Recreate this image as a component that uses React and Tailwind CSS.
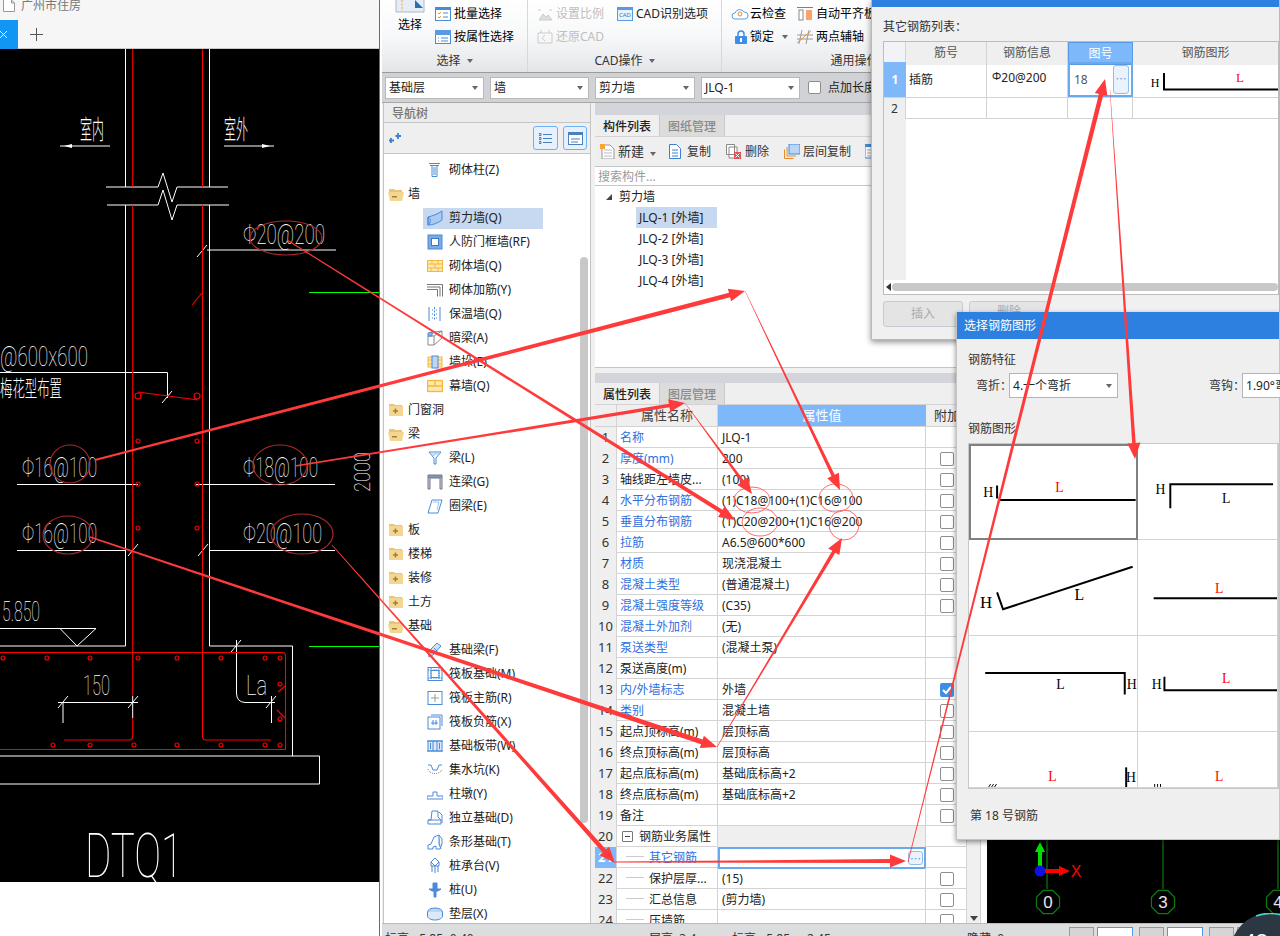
import React from "react";

const Caret = ({ c = "border-t-[#666]" }) => (
  <span className={`inline-block w-0 h-0 border-x-[3.5px] border-t-[4px] border-x-transparent ${c}`} />
);

function Ico({ k }) {
  const b = "#4a8ad8";
  const y = "#f5b83d";
  const common = { width: 16, height: 16, viewBox: "0 0 16 16", fill: "none", strokeWidth: 1, className: "shrink-0" };
  switch (k) {
    case "col": return <svg {...common} stroke={b}><path d="M2 1.5h11M3 3.5h9M5 3.5v11h5v-11M5 14.5h5M6 6h3M6 8h3M6 10h3M6 12h3" /></svg>;
    case "shear": return <svg {...common} stroke={b}><path d="M1 7c4-1 10-3 14-6v9c-4 3-9 5-14 5z" fill="#a9cbf2" /><path d="M1 7c3 1 3 6 0 8M1 7v8" /></svg>;
    case "rf": return <svg {...common}><rect x="1" y="1" width="14" height="14" fill="#7aa9e4" stroke={b} /><rect x="4.5" y="4.5" width="7" height="7" fill="#fff" stroke="#3d78c4" /></svg>;
    case "brick": return <svg {...common} stroke={y}><rect x="0.5" y="2.5" width="15" height="11" fill="#fde8ae" /><path d="M0.5 6h15M0.5 10h15M5 2.5V6M11 2.5V6M8 6v4M4 10v3.5M11 10v3.5" /></svg>;
    case "rw": return <svg {...common} stroke="#777"><path d="M0 2.5h15.5v12M0 5h13v9.5M0 7.5h10.5v7" /></svg>;
    case "ins": return <svg {...common} stroke={b}><path d="M2 1v14M13 1v14" /><path d="M7.5 1v14M5 4h1M9 4h1M5 8h1M9 8h1M5 12h1M9 12h1" strokeDasharray="2 1.5" /></svg>;
    case "dark": return <svg {...common} stroke="#888"><path d="M1 6h6v9H1zM1 6l7-4 7-1v7l-8 7M7 6l8-5" /><path d="M1 3l4-1v4H1z" fill="#8ab6ec" stroke={b} /></svg>;
    case "duo": return <svg {...common} stroke={y}><rect x="1" y="3" width="14" height="10" fill="#fde8ae" /><path d="M1 6h14M1 10h14" /><rect x="5" y="2" width="6" height="12" fill="#bcd6f5" stroke={b} /></svg>;
    case "cur": return <svg {...common} stroke={y}><rect x="0.5" y="2.5" width="15" height="11" fill="#fde8ae" strokeWidth="1.3" /><path d="M0.5 8h15M8 2.5V8" strokeWidth="1.3" /></svg>;
    case "beam": return <svg {...common} stroke={b}><path d="M2 2h12L9 8v6H7V8z" /><path d="M3 4h10M6 6l3-3" stroke="#9cc2f0" /></svg>;
    case "lin": return <svg {...common} stroke="#778"><path d="M1 1h14v3H1z" fill="#7d99b8" /><path d="M3 4v11h-2V4M15 4v11h-2V4" fill="#ccd" /></svg>;
    case "ring": return <svg {...common} stroke={b}><path d="M5 2h10l-4 13H1z" /><path d="M6 4h6l-2 8" stroke="#9cc2f0" /></svg>;
    case "fb": return <svg {...common} stroke={b}><path d="M1 10L10 1l4 3-8 9-4 2z" fill="#cfe1f7" /><path d="M4 9l3 3M7 6l3 3" /></svg>;
    case "raft": return <svg {...common} stroke={b}><rect x="1" y="1.5" width="14" height="13" /><rect x="4" y="4.5" width="8" height="7" /><path d="M1 4h14M1 12h14M4 1.5v13M12 1.5v13" strokeDasharray="1.5 1" /></svg>;
    case "rm": return <svg {...common} stroke={b}><rect x="1" y="1.5" width="14" height="13" /><path d="M8 4v8M4 8h8" stroke="#999" /></svg>;
    case "rn": return <svg {...common} stroke={b}><path d="M4 1h11v11" /><rect x="1" y="3" width="12" height="12" /><path d="M6 6v5M9 6v5M4 9h7" /></svg>;
    case "st": return <svg {...common} stroke={b}><rect x="1" y="3" width="14" height="10" fill="#dbe9fa" /><path d="M6 3v10M10 3v10M0 3h16M0 13h16M3.5 5v6M12.5 5v6" /></svg>;
    case "sump": return <svg {...common} stroke={b}><path d="M1 3h3l2 5h4l2-5h3" /><path d="M1 7c1 6 13 6 14 0" strokeDasharray="1 1" stroke="#888" /></svg>;
    case "pier": return <svg {...common} stroke={b}><path d="M0 13h16v-3H10V6H6v4H0z" /></svg>;
    case "foot": return <svg {...common} stroke={b}><path d="M5 1h6v6l3 3v4H1v-4h3zM1 10h13M12 2l3 3v8" /></svg>;
    case "sf": return <svg {...common} stroke={b}><path d="M1 15v-4l3-1 3-7 5-2 3 4v5l-2 5H9v-3l-3 1v2z" /><path d="M12 1v9l2 5" fill="#9cc2f0" /></svg>;
    case "cap": return <svg {...common} stroke={b}><path d="M8 0l4 4v4H4V4zM5 8v6M8 8v7M11 8v6M4 4l4 4 4-4" /></svg>;
    case "pile": return <svg {...common} fill="#4a8ad8" stroke={b}><path d="M6 1h4v6H6zM2 7h12l-3 2H5zM7 9h2v6H7z" /></svg>;
    case "cush": return <svg {...common} stroke={b}><ellipse cx="8" cy="6" rx="7.5" ry="4" fill="#bcd6f5" /><path d="M0.5 6v4c0 2 3 4 7.5 4s7.5-2 7.5-4V6" fill="#dbe9fa" /></svg>;
    default: return <span className="w-4 h-4" />;
  }
}

const Folder = ({ open }) => (
  <svg width="16" height="14" viewBox="0 0 16 14" className="shrink-0">
    {open ? (
      <>
        <path d="M1 2h5l1 1h7v3H1z" fill="#e8c47a" />
        <path d="M0 5h16l-2 9H2z" fill="#f3d691" />
        <path d="M4 9h5v1.5H4z" fill="#a57f30" />
      </>
    ) : (
      <>
        <path d="M1 1h5l1 1h7v2H1z" fill="#e8c47a" />
        <rect x="1" y="3" width="14" height="10" fill="#f3d691" />
        <path d="M5 7.3h5v1.4H5z M6.8 5.5h1.4v5H6.8z" fill="#a57f30" />
      </>
    )}
  </svg>
);

const tree = [
  ["c", "col", "砌体柱(Z)"], ["o", "墙"], ["c", "shear", "剪力墙(Q)", 1], ["c", "rf", "人防门框墙(RF)"], ["c", "brick", "砌体墙(Q)"],
  ["c", "rw", "砌体加筋(Y)"], ["c", "ins", "保温墙(Q)"], ["c", "dark", "暗梁(A)"], ["c", "duo", "墙垛(E)"], ["c", "cur", "幕墙(Q)"],
  ["f", "门窗洞"], ["o", "梁"], ["c", "beam", "梁(L)"], ["c", "lin", "连梁(G)"], ["c", "ring", "圈梁(E)"], ["f", "板"], ["f", "楼梯"],
  ["f", "装修"], ["f", "土方"], ["o", "基础"], ["c", "fb", "基础梁(F)"], ["c", "raft", "筏板基础(M)"], ["c", "rm", "筏板主筋(R)"],
  ["c", "rn", "筏板负筋(X)"], ["c", "st", "基础板带(W)"], ["c", "sump", "集水坑(K)"], ["c", "pier", "柱墩(Y)"], ["c", "foot", "独立基础(D)"],
  ["c", "sf", "条形基础(T)"], ["c", "cap", "桩承台(V)"], ["c", "pile", "桩(U)"], ["c", "cush", "垫层(X)"],
];

const rows = [
  [1, "名称", "JLQ-1", 0, 1], [2, "厚度(mm)", "200", 1, 1], [3, "轴线距左墙皮...", "(100)", 1, 0], [4, "水平分布钢筋", "(1)C18@100+(1)C16@100", 1, 1],
  [5, "垂直分布钢筋", "(1)C20@200+(1)C16@200", 1, 1], [6, "拉筋", "A6.5@600*600", 1, 1], [7, "材质", "现浇混凝土", 1, 1], [8, "混凝土类型", "(普通混凝土)", 1, 1],
  [9, "混凝土强度等级", "(C35)", 1, 1], [10, "混凝土外加剂", "(无)", 0, 1], [11, "泵送类型", "(混凝土泵)", 0, 1], [12, "泵送高度(m)", "", 0, 0],
  [13, "内/外墙标志", "外墙", 2, 1], [14, "类别", "混凝土墙", 1, 1], [15, "起点顶标高(m)", "层顶标高", 1, 0], [16, "终点顶标高(m)", "层顶标高", 1, 0],
  [17, "起点底标高(m)", "基础底标高+2", 1, 0], [18, "终点底标高(m)", "基础底标高+2", 1, 0], [19, "备注", "", 1, 0],
];
const subRows = [[22, "保护层厚...", "(15)"], [23, "汇总信息", "(剪力墙)"], [24, "压墙筋", ""]];

const CheckBox = ({ on }) =>
  on ? (
    <span className="w-[14px] h-[14px] rounded-[2px] bg-[#3d8ee6] flex items-center justify-center">
      <svg width="10" height="10" viewBox="0 0 10 10"><path d="M1 5l3 3 5-6" stroke="#fff" strokeWidth="2" fill="none" /></svg>
    </span>
  ) : (
    <span className="w-[14px] h-[14px] rounded-[2px] border border-[#8e8e8e] bg-white" />
  );

const line = "border-[#d3d3d3]";
const Row = ({ n, name, value, cb, blue, sub }) => (
  <div className={`grid grid-cols-[22px_101px_208px_40px] h-[21px] border-b ${line}`}>
    <div className={`bg-[#efefef] border-r ${line} text-[13px] text-[#333] text-center leading-[21px]`}>{n}</div>
    <div className={`border-r ${line} leading-[22px] whitespace-nowrap overflow-hidden flex ${blue ? "text-[#2f6fe0]" : "text-[#222]"} ${sub ? "pl-[9px]" : "pl-[3px]"}`}>
      {sub && <span className="w-[18px] h-[10px] border-b border-[#ccc] mr-[5px] shrink-0" />}
      <span>{name}</span>
    </div>
    <div className={`border-r ${line} pl-[4px] leading-[22px] text-[#222] whitespace-nowrap`}>{value}</div>
    <div className="flex items-center justify-center pl-[1px]">{cb ? <CheckBox on={cb === 2} /> : null}</div>
  </div>
);

const Tab = ({ on, children }) => (
  <div className={`h-[21px] w-[65px] border-r border-[#c8c8c8] flex items-center justify-center pt-[2px] font-medium ${on ? "bg-[#efefef] text-[#222]" : "bg-[#dcdcdc] text-[#8a8a8a]"}`}>{children}</div>
);

const Combo = ({ children, w }) => (
  <div className={`h-[22px] ${w} bg-white border border-[#b9b9b9] flex items-center justify-between pl-[3px] pr-[5px] text-[#222]`}>
    <span className="pt-[1px]">{children}</span><Caret />
  </div>
);

function Arrow({ p, q, a = 1, b = 4, head = true, h = 16, hw = 6.5 }) {
  const dx = q[0] - p[0], dy = q[1] - p[1], L = Math.hypot(dx, dy);
  const ux = dx / L, uy = dy / L, nx = -uy, ny = ux;
  const ex = head ? q[0] - ux * h : q[0], ey = head ? q[1] - uy * h : q[1];
  const pts = [
    [p[0] + (nx * a) / 2, p[1] + (ny * a) / 2], [ex + (nx * b) / 2, ey + (ny * b) / 2],
    ...(head ? [[ex + nx * hw, ey + ny * hw], q, [ex - nx * hw, ey - ny * hw]] : []),
    [ex - (nx * b) / 2, ey - (ny * b) / 2], [p[0] - (nx * a) / 2, p[1] - (ny * a) / 2],
  ];
  return <polygon points={pts.map((x) => x.join(",")).join(" ")} fill="#ff3a3a" />;
}

const CT = ({ x, y, w, s = 28, children }) => (
  <text x={x} y={y} fontSize={s} fontWeight="100" textLength={w} lengthAdjust="spacingAndGlyphs" fontFamily="Roboto,'Liberation Sans',sans-serif" fill="#fff">{children}</text>
);
const CJ = ({ x, y, w, s = 24, children }) => (
  <text x={x} y={y} fontSize={s} textLength={w} lengthAdjust="spacingAndGlyphs" fontFamily="'Noto Sans CJK SC',sans-serif" fontWeight="200" fill="#fff">{children}</text>
);

function Cad() {
  const W = "#fff", R = "#ff0000";
  const dots = [[3,658],[47,658],[90,658],[138,658],[177,658],[221,658],[265,658],[280,658],[53,745],[90,745],[134,745],[177,745],[221,745],[265,745],[280,745],[280,684],[280,719],[138,484],[197,484],[138,528],[197,528],[138,441],[197,441]];
  const ticks = [[202,251],[133,550],[203,550],[167,397],[236,646],[271,702],[63,702],[133,702]];
  return (
    <svg viewBox="0 49 379 833" className="block w-[379px] h-[833px] bg-black">
      <g stroke={W} strokeWidth="1" fill="none">
        <path d="M125.5 49V187M209.5 49V187M125.5 205V646H0M209.5 205V646H292.5V756M0 756H319.5V784H0" />
        <path d="M106 187H158L163 173L172 202L177 187H228M107 205H158L163 190L172 220L177 205H229" />
        <path d="M60 146H110M224 146H274M207 250H336M0 372.5H167.5V398M17 484.5H138M196 484.5H335M17 550.5H126M209 550.5H335M0 628.5H96L77 646L60 628.5" />
        <path d="M58 702.5H138M63 702V723M132.7 696V718M271.5 696V723M236.5 640V693Q236.5 702 245 702.5H275" />
        {ticks.map(([x, y], i) => <path key={i} d={`M${x - 5} ${y + 6}L${x + 5} ${y - 6}`} />)}
      </g>
      <path d="M64 146l8-2v4zM270 146l-8-2v4z" fill={W} />
      <g stroke={R} strokeWidth="1.1" fill="none">
        <path d="M132.7 49V187M202.5 49V187M132.7 205V696M132.7 718V736Q132.7 740 129 740H64M202.5 205V736Q202.5 740 206 740H271" />
        <path d="M0 652.5H282Q285.5 652.5 285.5 656V749.5H0M138 392L198 400M278 692l7-6M277 710l8 8M192 305l10-12" />
        {dots.map(([x, y], i) => <circle key={i} cx={x} cy={y} r="2" />)}
        <circle cx="138" cy="396" r="3" /><circle cx="197" cy="396" r="3" />
      </g>
      <path d="M309 292.5H379M309 646.5H379" stroke="#00ff00" strokeWidth="1" />
      <CJ x={80} y={139} w={24} s={26}>室内</CJ>
      <CJ x={224} y={139} w={24} s={26}>室外</CJ>
      <CT x={243} y={244} w={82}>Φ20@200</CT>
      <CT x={0} y={366} w={88}>@600x600</CT>
      <CJ x={0} y={396} w={62} s={22}>梅花型布置</CJ>
      <CT x={22} y={477} w={75}>Φ16@100</CT>
      <CT x={243} y={477} w={75}>Φ18@100</CT>
      <CT x={22} y={543} w={75}>Φ16@100</CT>
      <CT x={243} y={543} w={79}>Φ20@100</CT>
      <g transform="translate(370 492) rotate(-90)"><CT x={0} y={0} w={40} s={22}>2000</CT></g>
      <CT x={2} y={621} w={38}>5.850</CT>
      <CT x={83} y={695} w={27}>150</CT>
      <CT x={246} y={695} w={21}>La</CT>
      <CT x={85} y={877} w={98} s={62}>DTQ1</CT>
    </svg>
  );
}

const Cell = ({ vb, sel, children }) => (
  <div className={`bg-white border-b border-r border-[#d3d3d3] relative overflow-hidden ${sel ? "outline-2 -outline-offset-2 outline-[#808080]" : ""}`}>
    <svg viewBox={vb} className="w-full h-full block">{children}</svg>
  </div>
);
const TX = ({ x, y, c = "#000", s = 14, children }) => (
  <text x={x} y={y} fill={c} fontSize={s} textAnchor="middle" fontFamily="'Liberation Serif',serif">{children}</text>
);

export default function App() {
  return (
    <div className="relative w-[1280px] h-[936px] overflow-hidden flex bg-white text-[12px] font-['Noto_Sans','Noto_Sans_CJK_SC',sans-serif]">
      {/* left window */}
      <div className="w-[380px] shrink-0 border-r border-[#6a6a6a] flex flex-col">
        <div className="h-[49px] bg-[#f6f6f6] border-b border-[#c8c8c8] relative shrink-0">
          <div className="h-[20px] flex items-start">
            <svg width="12" height="12" viewBox="0 0 12 12" className="ml-[3px]"><path d="M.5 0v11.5h11V3L8.5 0M8.5 0v3h3" stroke="#999" fill="#fff" /></svg>
            <span className="ml-[6px] text-[#777] text-[12px] leading-[12px]">广州市住房</span>
          </div>
          <div className="flex h-[29px]">
            <div className="w-[18px] bg-[#1296f3] flex items-center justify-start">
              <svg width="8" height="8" viewBox="0 0 8 8"><path d="M0 0l7 7M7 0L0 7" stroke="#fff" /></svg>
            </div>
            <div className="ml-[12px] flex items-center">
              <svg width="13" height="13" viewBox="0 0 13 13"><path d="M6.5 0v13M0 6.5h13" stroke="#555" /></svg>
            </div>
          </div>
        </div>
        <Cad />
      </div>

      {/* right window */}
      <div className="flex-1 flex flex-col min-w-0 pl-[2px]">
        {/* ribbon */}
        <div className="h-[73px] shrink-0 flex bg-gradient-to-b from-white via-[#f7f8f9] to-[#e3e6e9] border-b border-[#9b9b9b]">
          <div className="w-[146px] border-r border-[#d6d8db] flex flex-col">
            <div className="flex-1 flex">
              <div className="w-[53px] flex flex-col items-center pl-[3px]">
                <svg width="30" height="13" viewBox="0 0 30 13"><path d="M1 0v12h28V0" fill="#e7edf6" stroke="#a8b8cc" /><path d="M7 0v11" stroke="#f3a41c" strokeDasharray="2 1.5" /><path d="M20 0l8 8h-8z" fill="#2d6db5" /></svg>
                <span className="mt-[3px] leading-[18px]">选择</span>
              </div>
              <div className="flex flex-col pt-[5px] gap-[5px]">
                <div className="flex items-center gap-[3px] h-[18px]">
                  <svg width="16" height="14" viewBox="0 0 16 14"><rect x=".5" y=".5" width="15" height="13" fill="#fff" stroke="#4a8ad8" /><rect y="0" width="16" height="3" fill="#4a8ad8" /><path d="M3 6l1 1 2-2M3 10l1 1 2-2" stroke="#f39a1c" fill="none" /><path d="M8 6h5M8 10h5" stroke="#4a8ad8" /></svg>
                  <span>批量选择</span>
                </div>
                <div className="flex items-center gap-[3px] h-[18px]">
                  <svg width="16" height="14" viewBox="0 0 16 14"><rect x=".5" y=".5" width="15" height="13" fill="#fff" stroke="#4a8ad8" /><rect width="16" height="5" fill="#5a9ae4" /><path d="M3 8h1M3 11h1M6 8h7M6 11h7" stroke="#4a8ad8" /></svg>
                  <span>按属性选择</span>
                </div>
              </div>
            </div>
            <div className="h-[22px] flex items-center justify-center gap-[6px] text-[#333]"><span>选择</span><Caret /></div>
          </div>

          <div className="w-[194px] border-r border-[#d6d8db] flex flex-col">
            <div className="flex-1 flex pl-[9px] pt-[5px]">
              <div className="w-[80px] flex flex-col gap-[5px] text-[#bfbfbf]">
                <div className="flex items-center gap-[3px] h-[18px]">
                  <svg width="16" height="14" viewBox="0 0 16 14"><path d="M1 3h3M12 3h3M2 13l4-6 3 3 2-2 4 5z" stroke="#ccc" fill="#ddd" /></svg><span>设置比例</span>
                </div>
                <div className="flex items-center gap-[3px] h-[18px]">
                  <svg width="16" height="14" viewBox="0 0 16 14"><path d="M1 3h14v10H1zM4 3V0M12 3V0M8 5l-3 3 3 3" stroke="#ccc" fill="none" /></svg><span>还原CAD</span>
                </div>
              </div>
              <div className="flex items-start gap-[3px] h-[18px]">
                <svg width="16" height="14" viewBox="0 0 16 14" className="mt-[2px]"><rect x=".5" y=".5" width="15" height="13" fill="#e9f1fb" stroke="#5a9ae4" /><rect width="16" height="3" fill="#5a9ae4" /><text x="8" y="10" fontSize="6" textAnchor="middle" fill="#3a76c0">CAD</text></svg>
                <span className="leading-[18px] text-[#222] whitespace-nowrap">CAD识别选项</span>
              </div>
            </div>
            <div className="h-[22px] flex items-center justify-center gap-[6px] text-[#333]"><span>CAD操作</span><Caret /></div>
          </div>

          <div className="w-[265px] flex flex-col">
            <div className="flex-1 flex pl-[9px] pt-[5px]">
              <div className="w-[66px] flex flex-col gap-[5px]">
                <div className="flex items-center gap-[1px] h-[18px]">
                  <svg width="18" height="12" viewBox="0 0 18 12"><path d="M4 11a3 3 0 0 1 0-6 5 5 0 0 1 9-1 3.5 3.5 0 0 1 1 7z" fill="#fff" stroke="#5a9ae4" /><circle cx="9" cy="6" r="2" fill="none" stroke="#f09030" /></svg>
                  <span>云检查</span>
                </div>
                <div className="flex items-center h-[18px] pl-[4px]">
                  <svg width="12" height="14" viewBox="0 0 12 14"><path d="M3 6V4a3 3 0 0 1 6 0v2" fill="none" stroke="#3d8ee6" strokeWidth="1.5" /><rect y="6" width="12" height="8" rx="1" fill="#3d8ee6" /><rect x="5" y="8" width="2" height="4" fill="#fff" /></svg>
                  <span className="ml-[3px] mr-[8px]">锁定</span><Caret />
                </div>
              </div>
              <div className="flex flex-col gap-[5px]">
                <div className="flex items-center gap-[3px] h-[18px] whitespace-nowrap">
                  <svg width="16" height="14" viewBox="0 0 16 14"><path d="M0 .5h16" stroke="#4a8ad8" /><rect x="2" y="3" width="4" height="10" fill="#fff" stroke="#888" /><rect x="9" y="3" width="6" height="10" fill="#f9a26c" /></svg>
                  <span>自动平齐板</span>
                </div>
                <div className="flex items-center gap-[3px] h-[18px] whitespace-nowrap">
                  <svg width="16" height="14" viewBox="0 0 16 14"><path d="M5 0L2 14M12 0L9 14M0 5h16M0 9h16" stroke="#999" /><path d="M0 13L14 1" stroke="#f09030" /></svg>
                  <span>两点辅轴</span><span className="ml-[4px]"><Caret /></span>
                </div>
              </div>
            </div>
            <div className="h-[22px] flex items-center justify-center text-[#333]"><span>通用操作</span></div>
          </div>
        </div>

        {/* selector row */}
        <div className="h-[30px] shrink-0 bg-[#d0d2d6] border-b border-[#a8a8a8] flex items-center pl-[3px] gap-[6px]">
          <Combo w="w-[99px]">基础层</Combo>
          <Combo w="w-[99px]">墙</Combo>
          <Combo w="w-[100px]">剪力墙</Combo>
          <Combo w="w-[99px]">JLQ-1</Combo>
          <span className="ml-[2px] w-[13px] h-[13px] rounded-[2px] border border-[#8e8e8e] bg-white" />
          <span className="ml-[1px] pt-[1px] whitespace-nowrap text-[#222]">点加长度</span>
        </div>

        {/* body */}
        <div className="flex-1 flex min-h-0 bg-[#f0f0f0]">
          {/* nav */}
          <div className="w-[208px] ml-[1px] shrink-0 flex flex-col border-x border-[#c5c5c5] bg-white relative">
            <div className="h-[20px] bg-[#ececec] border-b border-[#c5c5c5] pl-[8px] leading-[21px] text-[#777] font-medium shrink-0">导航树</div>
            <div className="h-[31px] bg-[#efefef] border-b border-[#c5c5c5] flex items-center justify-between pl-[5px] pr-[3px] shrink-0">
              <svg width="13" height="11" viewBox="0 0 13 11"><path d="M2 5v5M0 7.5h5M9 0v6M6.5 3h5.5" stroke="#3d7fd0" strokeWidth="1.8" /></svg>
              <div className="flex gap-[5px]">
                <div className="w-[25px] h-[24px] rounded-[3px] border border-[#6cb0f5] bg-[#e6f1fd] flex items-center justify-center">
                  <svg width="13" height="13" viewBox="0 0 13 13"><path d="M0 1.5h2v2H0zM0 5.5h2v2H0zM0 9.5h2v2H0zM4 2.5h9M4 6.5h9M4 10.5h9" stroke="#4a7fc0" fill="none" /></svg>
                </div>
                <div className="w-[24px] h-[24px] rounded-[3px] border border-[#6cb0f5] bg-[#e6f1fd] flex items-center justify-center">
                  <svg width="15" height="13" viewBox="0 0 15 13"><rect x=".5" y=".5" width="14" height="12" fill="#fff" stroke="#4a7fc0" /><rect width="15" height="3" fill="#4a7fc0" /><path d="M3 7h9M3 10h7" stroke="#4a7fc0" /></svg>
                </div>
              </div>
            </div>
            <div className="flex-1 pt-[4px] overflow-hidden relative">
              {tree.map((t, i) =>
                t[0] === "c" ? (
                  <div key={i} className="h-[24px] flex items-center pl-[39px] text-[#222]">
                    <div className={`flex items-center h-[21px] pl-[4px] ${t[3] ? "bg-[#c6d9f0] w-[120px]" : ""}`}>
                      <Ico k={t[1]} /><span className="ml-[6px] whitespace-nowrap">{t[2]}</span>
                    </div>
                  </div>
                ) : (
                  <div key={i} className="h-[24px] flex items-center pl-[4px] text-[#222]">
                    <Folder open={t[0] === "o"} /><span className="ml-[4px]">{t[1]}</span>
                  </div>
                )
              )}
              <div className="absolute left-[196px] top-[103px] w-[8px] h-[566px] rounded-full bg-[#c8c8c8]" />
            </div>
          </div>

          <div className="w-[4px] shrink-0" />

          {/* middle */}
          <div className="w-[392px] shrink-0 flex flex-col">
            <div className="h-[265px] bg-white flex flex-col border-b border-[#c5c5c5] shrink-0">
              <div className="h-[12px] bg-[#d3d5da] shrink-0" />
              <div className="h-[22px] flex bg-[#efefef] border-b border-[#d3d3d3] shrink-0"><Tab on>构件列表</Tab><Tab>图纸管理</Tab></div>
              <div className="h-[30px] bg-[#efefef] flex items-center pl-[5px] text-[#333] border-b border-[#c5c5c5] shrink-0">
                <svg width="15" height="15" viewBox="0 0 15 15"><path d="M2 1h8l4 4v10H2z" fill="#fff" stroke="#999" /><path d="M4 6h8M4 9h8M4 12h8" stroke="#bbb" /><rect x="0" y="0" width="5" height="5" fill="#f7a53a" /></svg>
                <span className="ml-[3px] text-[13px] pt-[1px]">新建</span><span className="ml-[6px]"><Caret /></span>
                <svg width="12" height="15" viewBox="0 0 12 15" className="ml-[13px]"><path d="M.5.5h7l4 4v10H.5z" fill="#fff" stroke="#3d7fd0" /><path d="M3 6h6M3 9h6M3 12h6" stroke="#3d7fd0" /></svg>
                <span className="ml-[6px] pt-[1px]">复制</span>
                <svg width="15" height="15" viewBox="0 0 15 15" className="ml-[15px]"><path d="M.5.5h8v10h-8zM3 3h8v11H3z" fill="#fff" stroke="#888" /><rect x="8" y="8" width="7" height="7" fill="#e25050" /><path d="M9.5 9.5l4 4M13.5 9.5l-4 4" stroke="#fff" /></svg>
                <span className="ml-[4px] pt-[1px]">删除</span>
                <svg width="16" height="15" viewBox="0 0 16 15" className="ml-[15px]"><rect x="5" y="0" width="11" height="10" fill="#b9d6f8" stroke="#4a8ad8" /><path d="M3 3v9h9M.5 5.5v9h9" stroke="#e88a2e" fill="none" /></svg>
                <span className="ml-[3px] pt-[1px]">层间复制</span>
                <svg width="8" height="15" viewBox="0 0 8 15" className="ml-[14px]"><rect width="16" height="14" fill="#fff" stroke="#4a8ad8" /><rect width="16" height="3" fill="#4a8ad8" /><path d="M2 6h6M2 9h6M2 12h6" stroke="#aaa" /></svg>
              </div>
              <div className="h-[19px] pl-[3px] leading-[19px] text-[#9a9a9a] border-b border-[#c5c5c5] shrink-0">搜索构件...</div>
              <div className="flex-1 text-[#222]">
                <div className="h-[21px] flex items-center pl-[11px]">
                  <span className="w-0 h-0 border-l-[6px] border-b-[6px] border-l-transparent border-b-[#444]" />
                  <span className="ml-[7px]">剪力墙</span>
                </div>
                {["JLQ-1 [外墙]", "JLQ-2 [外墙]", "JLQ-3 [外墙]", "JLQ-4 [外墙]"].map((t, i) => (
                  <div key={t} className="h-[21px] flex items-center pl-[41px]">
                    <span className={`h-[21px] leading-[21px] pl-[3px] w-[81px] whitespace-nowrap ${i === 0 ? "bg-[#c6d9f0]" : ""}`}>{t}</span>
                  </div>
                ))}
              </div>
            </div>
            <div className="h-[5px] shrink-0" />
            <div className="flex-1 bg-white flex flex-col min-h-0 overflow-hidden">
              <div className="h-[10px] bg-[#d3d5da] shrink-0" />
              <div className="h-[22px] flex bg-[#efefef] border-b border-[#d3d3d3] shrink-0"><Tab on>属性列表</Tab><Tab>图层管理</Tab></div>
              <div className="flex flex-1 min-h-0">
                <div className="w-[371px] shrink-0 overflow-hidden">
                  <div className={`grid grid-cols-[22px_101px_208px_40px] h-[22px] border-b ${line} text-[13px]`}>
                    <div className={`bg-[#efefef] border-r ${line}`} />
                    <div className={`bg-[#efefef] border-r ${line} text-center text-[#444] leading-[21px]`}>属性名称</div>
                    <div className="bg-[#7db9fa] text-white text-center leading-[21px]">属性值</div>
                    <div className="bg-[#efefef] pl-[8px] text-[#333] leading-[21px] whitespace-nowrap overflow-hidden">附加</div>
                  </div>
                  {rows.map((r) => <Row key={r[0]} n={r[0]} name={r[1]} value={r[2]} cb={r[3]} blue={[1,2,4,5,6,7,8,9,10,11,13,14].includes(r[0])} />)}
                  <div className={`grid grid-cols-[22px_101px_208px_40px] h-[21px] border-b ${line}`}>
                    <div className={`bg-[#efefef] border-r ${line} text-[13px] text-[#333] text-center leading-[21px]`}>20</div>
                    <div className={`border-r ${line} flex items-center pl-[5px] text-[#222] whitespace-nowrap`}>
                      <span className="w-[11px] h-[11px] border border-[#777] rounded-[1px] flex items-center justify-center"><span className="w-[5px] h-px bg-[#444]" /></span>
                      <span className="ml-[6px] pt-[1px]">钢筋业务属性</span>
                    </div>
                    <div className={`bg-[#efefef] border-r ${line}`} />
                    <div />
                  </div>
                  <div className={`grid grid-cols-[22px_101px_208px_40px] h-[21px] border-b ${line}`}>
                    <div className={`bg-[#7fb8f8] text-white text-[13px] font-bold text-center leading-[21px] border-r ${line}`}>21</div>
                    <div className={`border-r ${line} flex pl-[9px] text-[#2f6fe0] leading-[22px]`}>
                      <span className="w-[18px] h-[10px] border-b border-[#ccc] mr-[5px] shrink-0" /><span>其它钢筋</span>
                    </div>
                    <div className="border-2 border-[#6aa9ec] flex items-center justify-end pr-[1px]">
                      <span className="w-[15px] h-[14px] rounded-[3px] border border-[#8fbdf0] bg-[#eaf2fb] flex items-center justify-center text-[#5a9ae4] leading-none text-[11px]">⋯</span>
                    </div>
                    <div />
                  </div>
                  {subRows.map((r) => <Row key={r[0]} n={r[0]} name={r[1]} value={r[2]} cb={1} sub />)}
                </div>
                <div className={`w-[15px] bg-[#f0f0f0] border-x ${line} flex flex-col justify-end items-center pb-[2px]`}>
                  <span className="w-0 h-0 border-x-[4px] border-t-[5px] border-x-transparent border-t-[#444]" />
                </div>
              </div>
            </div>
          </div>

          {/* cad view behind dialogs */}
          <div className="flex-1 bg-black relative flex flex-col justify-end overflow-hidden">
            <svg viewBox="987 840 293 83" className="block w-[293px] h-[83px]">
              <g fill="none" stroke="#0c7a0c" strokeWidth="1.2">
                <path d="M1047 840V889M1163 840V889M1278 840V889" />
                {[1048, 1163, 1278].map((x) => (
                  <polygon key={x} points={[0,1,2,3,4,5,6,7].map((i) => `${x + 12.5 * Math.cos(Math.PI / 8 + i * Math.PI / 4)},${902 + 12.5 * Math.sin(Math.PI / 8 + i * Math.PI / 4)}`).join(" ")} />
                ))}
              </g>
              <g fill="#e8e8e8" fontSize="17" textAnchor="middle" fontFamily="'Liberation Sans',sans-serif">
                <text x="1048" y="908">0</text><text x="1163" y="908">3</text><text x="1278" y="908">4</text>
              </g>
              <path d="M1038 871V852H1035L1040 842L1045 852H1042V871z" fill="#00e000" />
              <path d="M1040 869H1059V866L1070 871L1059 876V873H1040z" fill="#f00" />
              <circle cx="1040" cy="871" r="5.5" fill="#1010e0" />
              <text x="1076" y="877" fill="#f00" fontSize="16" textAnchor="middle" fontFamily="'Liberation Sans',sans-serif">X</text>
            </svg>
          </div>
        </div>

        {/* status bar */}
        <div className="h-[13px] shrink-0 bg-[#dcdddf] border-t border-[#bbb] flex items-start text-[#333] overflow-hidden leading-[12px]">
          <span className="ml-[3px] mt-[9px] w-[264px] whitespace-nowrap">标高: -5.85~0.40</span>
          <span className="mt-[9px] w-[83px] whitespace-nowrap">层高: 3.4</span>
          <span className="mt-[9px] w-[235px] whitespace-nowrap">标高: -5.85 ~ -2.45</span>
          <span className="mt-[9px] whitespace-nowrap">隐藏: 0</span>
          <div className="ml-auto mt-[3px] w-[25px] h-[14px] bg-[#d5d5d5] border border-[#999]" />
          <div className="ml-[3px] mt-[3px] w-[36px] h-[14px] bg-white border border-[#4a9ae8]" />
          <div className="ml-[6px] mt-[3px] w-[25px] h-[14px] bg-[#d5d5d5] border border-[#999]" />
          <div className="ml-[3px] mt-[3px] w-[36px] h-[14px] bg-white border border-[#4a9ae8]" />
          <div className="ml-[6px] mt-[3px] w-[25px] h-[14px] bg-[#d5d5d5] border border-[#999]" />
          <div className="ml-[3px] mr-[7px] mt-[3px] w-[36px] h-[14px] bg-[#d5d5d5] border border-[#999]" />
        </div>
      </div>

      {/* dialog 1 */}
      <div className="absolute left-[871px] top-0 w-[409px] h-[340px] bg-[#f0f0f0] border-x border-b border-[#b9b9b9] shadow-[0_2px_6px_rgba(0,0,0,0.45)] flex flex-col">
        <div className="h-[7px] bg-[#2d7fe0] shrink-0" />
        <div className="pl-[11px] pt-[11px] h-[34px] text-[#333] shrink-0">其它钢筋列表：</div>
        <div className="ml-[11px] h-[254px] bg-white border border-[#bdbdbd] flex flex-col relative">
          <div className="grid grid-cols-[22px_81px_81px_65px_1fr] h-[20px] text-[#555] text-center leading-[21px] border-b border-[#d3d3d3]">
            <div className="bg-[#f1f3f6] border-r border-[#d3d3d3]" />
            <div className="bg-[#efefef] border-r border-[#d3d3d3]">筋号</div>
            <div className="bg-[#efefef] border-r border-[#d3d3d3]">钢筋信息</div>
            <div className="bg-[#7db9fa] text-white border border-[#5a9ae4]">图号</div>
            <div className="bg-[#efefef]">钢筋图形</div>
          </div>
          <div className="grid grid-cols-[22px_81px_81px_65px_1fr] h-[36px] border-b border-[#d3d3d3] text-[#222]">
            <div className="bg-[#7fb8f8] text-white font-bold flex items-center justify-center">1</div>
            <div className="border-r border-[#d3d3d3] flex items-center pl-[3px] pt-[1px]">插筋</div>
            <div className="border-r border-[#d3d3d3] flex items-start pt-[7px] pl-[5px]"><span className="text-[11px] -mt-px">Φ</span>20@200</div>
            <div className="border-2 border-[#6aa9ec] flex items-center justify-between pl-[4px] pr-[2px] text-[#555]">
              <span>18</span>
              <span className="w-[16px] h-[29px] rounded-[3px] border border-[#8fbdf0] bg-[#eaf2fb] flex items-center justify-center text-[#5a9ae4] text-[11px]">⋯</span>
            </div>
            <div className="overflow-hidden">
              <svg viewBox="1133 62 147 36" className="block h-[36px] w-[147px]">
                <TX x={1155} y={87} s={12}>H</TX>
                <path d="M1164 73V89.5H1280" stroke="#000" strokeWidth="2" fill="none" />
                <TX x={1240} y={82} c="#f00" s={13}>L</TX>
              </svg>
            </div>
          </div>
          <div className="grid grid-cols-[22px_81px_81px_65px_1fr] h-[21px] border-b border-[#d3d3d3]">
            <div className="bg-[#efefef] border-r border-[#d3d3d3] text-center leading-[21px] text-[#333]">2</div>
            <div className="border-r border-[#d3d3d3]" /><div className="border-r border-[#d3d3d3]" /><div className="border-r border-[#d3d3d3]" /><div />
          </div>
          <div className="flex-1 flex flex-col">
            <div className="flex-1 w-[22px] bg-[#efefef]" />
            <div className="h-[14px] flex items-center pl-[2px]">
              <span className="w-0 h-0 border-y-[4px] border-r-[5px] border-y-transparent border-r-[#333]" />
              <span className="ml-[1px] flex-1 h-[8px] rounded-full bg-[#c8c8c8]" />
            </div>
          </div>
        </div>
        <div className="flex ml-[11px] mt-[6px] gap-[6px]">
          <div className="w-[80px] h-[26px] rounded-[3px] border border-[#c6ccd6] bg-[#e4e4e4] text-[#aaa] flex items-center justify-center">插入</div>
          <div className="w-[80px] h-[26px] rounded-[3px] border border-[#c6ccd6] bg-[#e4e4e4] text-[#aaa] flex items-start justify-center overflow-hidden leading-[20px]">删除</div>
        </div>
      </div>

      {/* dialog 2 */}
      <div className="absolute left-[956px] top-[312px] w-[324px] h-[528px] bg-[#efefef] border-x border-b border-[#c4c4c4] shadow-[0_2px_5px_rgba(0,0,0,0.45)] flex flex-col">
        <div className="h-[27px] bg-[#2d7fe0] text-white pl-[7px] leading-[28px] shrink-0">选择钢筋图形</div>
        <div className="pl-[11px] pt-[12px] leading-[18px] text-[#333]">钢筋特征</div>
        <div className="flex items-center mt-[4px] pl-[19px] h-[25px]">
          <span className="text-[#333] whitespace-nowrap pt-[1px]">弯折：</span>
          <div className="w-[109px] h-[25px] bg-white border border-[#b5b5b5] flex items-center justify-between pl-[3px] pr-[5px] text-[#222] shrink-0 -ml-[3px]"><span className="pt-[1px]">4.一个弯折</span><Caret /></div>
          <span className="ml-[91px] text-[#333] whitespace-nowrap pt-[1px]">弯钩：</span>
          <div className="w-[60px] h-[25px] bg-white border border-[#b5b5b5] pl-[3px] leading-[24px] text-[#222] shrink-0 -ml-[3px] whitespace-nowrap overflow-hidden">1.90°弯钩</div>
        </div>
        <div className="pl-[11px] mt-[22px] leading-[18px] text-[#333]">钢筋图形</div>
        <div className="ml-[11px] mt-[5px] h-[346px] border border-[#c8c8c8] grid grid-cols-[169px_1fr] grid-rows-[96px_96px_96px_56px] overflow-hidden">
          <Cell vb="969 444 169 96" sel>
            <TX x={988} y={498}>H</TX><path d="M997 486V499M998 500.5H1137" stroke="#000" strokeWidth="2" fill="none" />
            <TX x={1060} y={493} c="#f00">L</TX>
          </Cell>
          <Cell vb="1138 444 142 96">
            <TX x={1161} y={495}>H</TX><path d="M1171 509V484.5H1276" stroke="#000" strokeWidth="2" fill="none" />
            <TX x={1228} y={504}>L</TX>
          </Cell>
          <Cell vb="969 540 169 96">
            <TX x={986} y={609} s={17}>H</TX><path d="M997 593L1003 610L1134 567" stroke="#000" strokeWidth="2" fill="none" />
            <TX x={1080} y={601} s={16}>L</TX>
          </Cell>
          <Cell vb="1138 540 142 96">
            <path d="M1154 599H1280" stroke="#000" strokeWidth="2" />
            <TX x={1221} y={594} c="#f00">L</TX>
          </Cell>
          <Cell vb="969 636 169 96">
            <path d="M985 673.5H1126V695" stroke="#000" strokeWidth="2" fill="none" />
            <TX x={1061} y={690}>L</TX><TX x={1133} y={690}>H</TX>
          </Cell>
          <Cell vb="1138 636 142 96">
            <TX x={1157} y={690}>H</TX><path d="M1165 677V691H1280" stroke="#000" strokeWidth="2" fill="none" />
            <TX x={1228} y={684} c="#f00">L</TX>
          </Cell>
          <Cell vb="969 732 169 56">
            <TX x={1053} y={782} c="#f00">L</TX><path d="M1128 768V788" stroke="#000" strokeWidth="2" />
            <TX x={1133} y={783}>H</TX><path d="M988 788l2-3M991 788l2-3M994 788l2-3" stroke="#000" />
          </Cell>
          <Cell vb="1138 732 142 56">
            <TX x={1221} y={782} c="#f00">L</TX><path d="M1155 788v-3M1158 788v-3M1161 788v-3" stroke="#000" />
          </Cell>
        </div>
        <div className="pl-[13px] mt-[18px] text-[#333]">第 18 号钢筋</div>
      </div>

      {/* annotations on top */}
      <svg className="absolute left-0 top-0 pointer-events-none" width="1280" height="936" viewBox="0 0 1280 936">
        <g fill="none" stroke="#a8282c" strokeWidth="1.2">
          <ellipse cx="286" cy="238" rx="36" ry="17" />
          <ellipse cx="70" cy="464" rx="20" ry="19" />
          <ellipse cx="280" cy="465" rx="27" ry="20" />
          <ellipse cx="68" cy="535" rx="25" ry="19" />
          <ellipse cx="302" cy="534" rx="31" ry="20" />
        </g>
        <g fill="none" stroke="#ff6a6a" strokeWidth="1">
          <ellipse cx="752" cy="500" rx="18" ry="13" />
          <ellipse cx="836" cy="498" rx="17" ry="14" />
          <ellipse cx="760" cy="522" rx="18" ry="14" />
          <ellipse cx="844" cy="525" rx="15" ry="15" />
        </g>
        <Arrow p={[95, 460]} q={[745, 291]} a={2} b={4.5} />
        <Arrow p={[745, 291]} q={[840, 490]} a={0.4} b={3.5} />
        <Arrow p={[295, 466]} q={[685, 403]} a={1.5} b={3.5} />
        <Arrow p={[685, 403]} q={[752, 494]} a={0.4} b={3} />
        <Arrow p={[287, 240]} q={[735, 520]} a={1} b={4} />
        <Arrow p={[90, 537]} q={[717, 747]} a={1.5} b={5} />
        <Arrow p={[717, 747]} q={[842, 538]} a={0.5} b={3.5} />
        <Arrow p={[332, 545]} q={[615, 863]} a={0.8} b={4.5} />
        <Arrow p={[615, 862]} q={[906, 861]} a={0.8} b={4} />
        <Arrow p={[908, 862]} q={[1105, 79]} a={0.8} b={4.5} />
        <Arrow p={[1110, 90]} q={[1135, 459]} a={0.3} b={3.5} />
      </svg>

      {/* floating gauge */}
      <div className="absolute left-[1230px] top-[913px] w-[80px] h-[80px] rounded-full bg-[#2c3744] text-white text-[22px] pl-[13px] pt-[17px] leading-none">
        <svg width="80" height="80" viewBox="0 0 80 80" className="absolute left-0 top-0"><path d="M26 3A40 40 0 0 1 56 4" stroke="#46d1c4" strokeWidth="1.5" fill="none" /></svg>
        48
      </div>
    </div>
  );
}
